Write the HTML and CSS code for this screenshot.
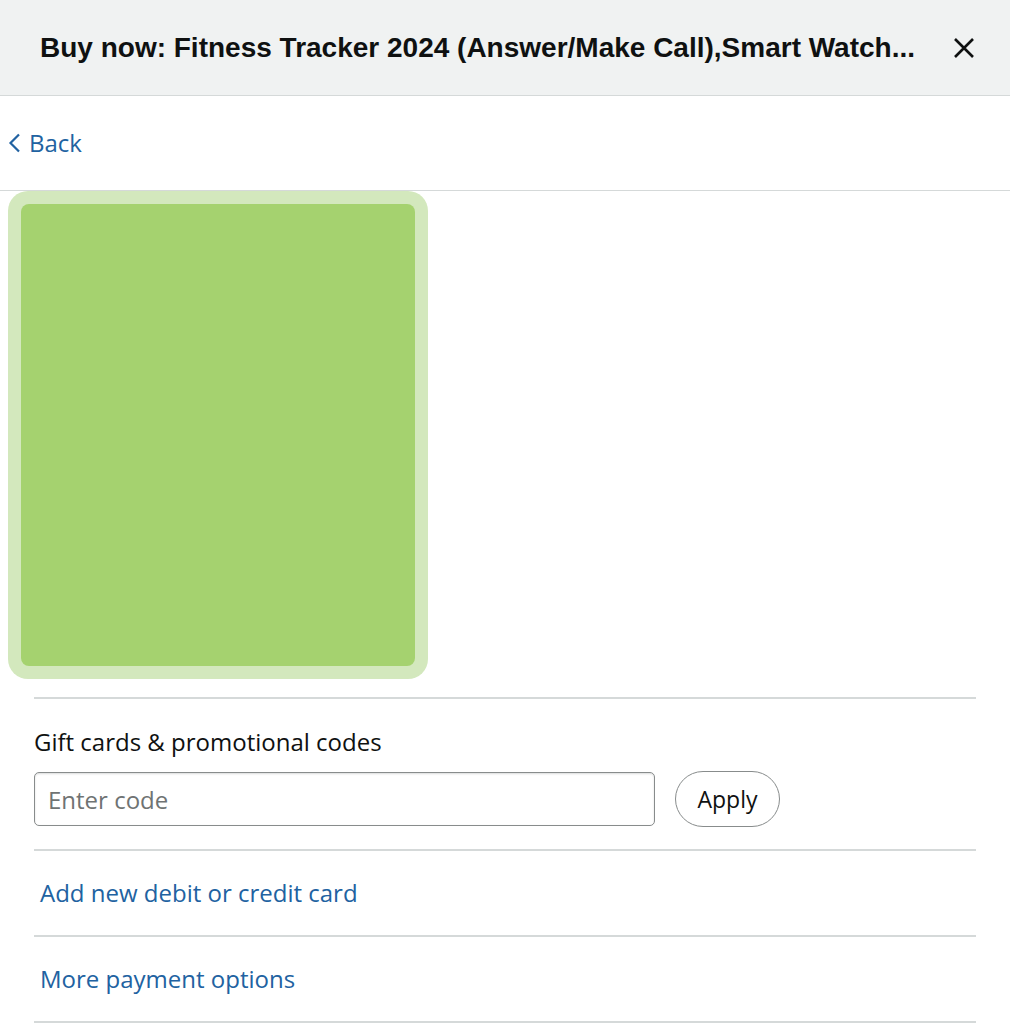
FILE: index.html
```html
<!DOCTYPE html>
<html lang="en">
<head>
<meta charset="utf-8">
<title>Buy now</title>
<link rel="stylesheet" href="styles.css">
</head>
<body>
<div class="sheet">
  <header class="header">
    <h1 class="title">Buy now: Fitness Tracker 2024 (Answer/Make Call),Smart Watch...</h1>
    <button class="close" aria-label="Close">
      <svg width="24" height="24" viewBox="0 0 24 24"><path d="M3 3 L21 21 M21 3 L3 21" stroke="#0f1111" stroke-width="2.6" fill="none"/></svg>
    </button>
  </header>
  <nav class="back-row">
    <a class="back" href="#">
      <svg width="13" height="22" viewBox="0 0 13 22"><path d="M11 2.5 L2.5 11 L11 19.5" stroke="#2162a1" stroke-width="2.2" fill="none"/></svg>
      <span>Back</span>
    </a>
  </nav>
  <div class="card-wrap">
    <div class="card"><div class="card-inner"></div></div>
  </div>
  <section class="payment">
    <div class="gift">
      <label class="gift-label" for="code">Gift cards &amp; promotional codes</label>
      <div class="gift-row">
        <input id="code" class="code-input" type="text" placeholder="Enter code">
        <button class="apply">Apply</button>
      </div>
    </div>
    <a class="option" href="#">Add new debit or credit card</a>
    <a class="option" href="#">More payment options</a>
  </section>
</div>
</body>
</html>
```
FILE: styles.css
```css
* { box-sizing: border-box; }
html, body { margin: 0; padding: 0; background: #fff; }
body { font-family: "Open Sans", "Liberation Sans", sans-serif; color: #0f1111; }
.sheet { width: 1010px; }
.header {
  height: 96px;
  background: #f0f2f2;
  border-bottom: 1px solid #d5d9d9;
  display: flex;
  align-items: center;
  padding: 0 34px 0 40px;
  gap: 20px;
}
.title {
  flex: 1;
  margin: 0;
  font-family: "Liberation Sans", Arial, sans-serif;
  font-size: 28px;
  font-weight: 700;
  white-space: nowrap;
  line-height: 32px;
  padding-top: 1px;
}
.close {
  background: none;
  border: 0;
  padding: 0;
  width: 24px;
  height: 24px;
  display: flex;
  cursor: pointer;
}
.back-row {
  height: 95px;
  border-bottom: 1px solid #d5d9d9;
  display: flex;
  align-items: center;
  padding-left: 8px;
}
.back {
  display: flex;
  align-items: center;
  gap: 8px;
  color: #2162a1;
  text-decoration: none;
  font-size: 24px;
  line-height: 32px;
}
.card-wrap { padding-left: 8px; }
.card {
  width: 420px;
  height: 488px;
  padding: 13px;
  border-radius: 20px;
  background: #d3e8bd;
}
.card-inner {
  height: 100%;
  border-radius: 8px;
  background: #a5d26f;
}
.payment {
  margin: 18px 34px 0 34px;
  border-top: 2px solid #d5d9d9;
}
.gift {
  padding: 27px 0 22px;
  border-bottom: 2px solid #d5d9d9;
}
.gift-label {
  display: block;
  font-size: 24px;
  line-height: 32px;
  margin-bottom: 13px;
}
.gift-row { display: flex; align-items: center; gap: 20px; }
.code-input {
  width: 621px;
  height: 54px;
  border: 1px solid #888c8c;
  border-radius: 5px;
  box-shadow: inset 0 1px 2px rgba(15,17,17,0.15);
  padding: 0 13px;
  font-family: "Open Sans", sans-serif;
  font-size: 24px;
  color: #0f1111;
  outline: none;
}
.code-input::placeholder { color: #6f7373; }
.apply {
  width: 105px;
  height: 56px;
  border: 1px solid #888c8c;
  border-radius: 28px;
  background: #fff;
  font-family: "Open Sans", sans-serif;
  font-size: 23px;
  color: #0f1111;
  padding: 0;
}
.option {
  display: flex;
  align-items: center;
  height: 86px;
  padding: 0 6px 2px;
  border-bottom: 2px solid #d5d9d9;
  color: #2162a1;
  text-decoration: none;
  font-size: 24px;
}
```
